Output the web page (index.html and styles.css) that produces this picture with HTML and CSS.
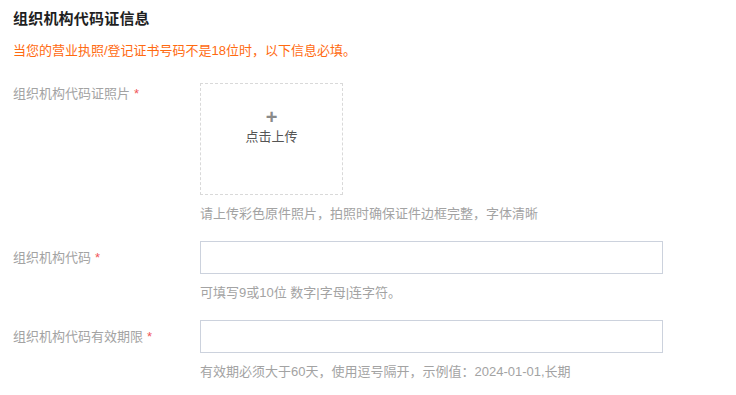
FILE: index.html
```html
<!DOCTYPE html>
<html lang="zh-CN">
<head>
<meta charset="utf-8">
<link rel="stylesheet" href="styles.css">
</head>
<body>
<section class="panel">
  <h3 class="title">组织机构代码证信息</h3>
  <p class="notice">当您的营业执照/登记证书号码不是18位时，以下信息必填。</p>

  <div class="row row-upload">
    <div class="label label-top">组织机构代码证照片<span class="req">*</span></div>
    <div class="field">
      <div class="upload">
        <span class="plus">+</span>
        <span class="upload-text">点击上传</span>
      </div>
      <div class="hint">请上传彩色原件照片，拍照时确保证件边框完整，字体清晰</div>
    </div>
  </div>

  <div class="row">
    <div class="label">组织机构代码<span class="req">*</span></div>
    <div class="field">
      <input class="input" type="text">
      <div class="hint">可填写9或10位 数字|字母|连字符。</div>
    </div>
  </div>

  <div class="row">
    <div class="label">组织机构代码有效期限<span class="req">*</span></div>
    <div class="field">
      <input class="input" type="text">
      <div class="hint">有效期必须大于60天，使用逗号隔开，示例值：2024-01-01,长期</div>
    </div>
  </div>
</section>
</body>
</html>
```

FILE: styles.css
```css
html, body {
  margin: 0;
  padding: 0;
  background: #fff;
}
body {
  font-family: "Liberation Sans", "Noto Sans CJK SC", sans-serif;
  font-size: 13px;
  color: #333;
}
.panel {
  padding: 9px 13px 0 13px;
}
.title {
  margin: 0;
  font-size: 15px;
  line-height: 20px;
  font-weight: bold;
  color: #1f1f1f;
  letter-spacing: 0.2px;
}
.notice {
  margin: 12px 0 0 0;
  font-size: 13px;
  line-height: 20px;
  color: #ff6a10;
}
.row {
  display: flex;
  margin-bottom: 17px;
}
.row-upload {
  margin-top: 22px;
}
.label {
  width: 187px;
  flex: none;
  line-height: 33px;
  color: #a3a3a3;
}
.label-top {
  line-height: 21px;
}
.req {
  color: #f0565a;
  margin-left: 4px;
}
.field {
  display: flex;
  flex-direction: column;
  align-items: flex-start;
}
.upload {
  box-sizing: border-box;
  width: 143px;
  height: 112px;
  border: 1px dashed #d9d9d9;
  display: flex;
  flex-direction: column;
  align-items: center;
  padding-top: 24px;
}
.plus {
  font-size: 20px;
  line-height: 18px;
  color: #8a8a8a;
  font-weight: bold;
}
.upload-text {
  margin-top: 1px;
  line-height: 20px;
  color: #555;
}
.input {
  box-sizing: border-box;
  width: 463px;
  height: 33px;
  margin: 0;
  border: 1px solid #ccd2dd;
  border-radius: 0;
  outline: none;
  padding: 0 10px;
  font: inherit;
}
.hint {
  margin-top: 9px;
  line-height: 20px;
  color: #a3a3a3;
}
```
